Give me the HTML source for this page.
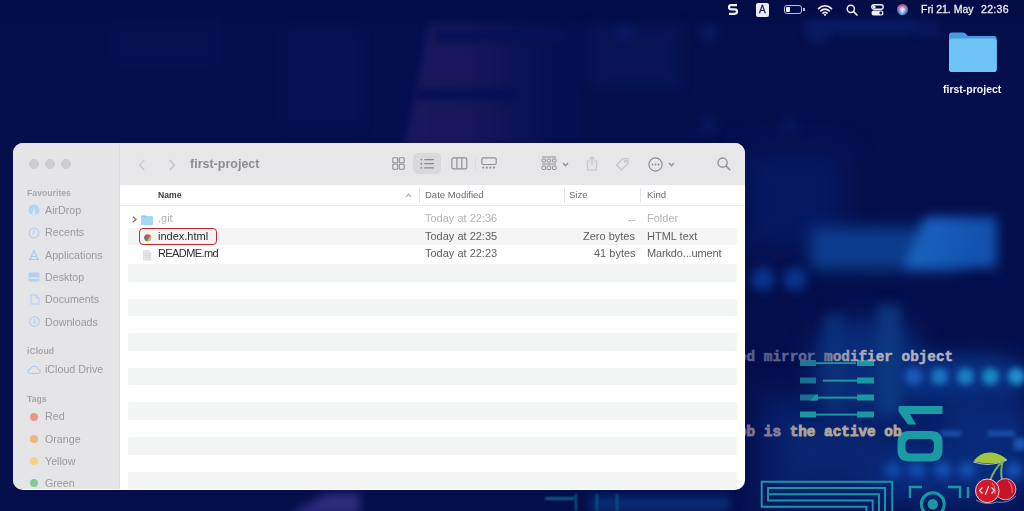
<!DOCTYPE html>
<html><head><meta charset="utf-8">
<style>
*{margin:0;padding:0;box-sizing:border-box}
html,body{width:1024px;height:511px;overflow:hidden}
body{position:relative;background:#040b4c;font-family:"Liberation Sans",sans-serif}
.abs{position:absolute}
svg{position:absolute;overflow:visible}
.t{position:absolute;line-height:1;white-space:nowrap;will-change:transform}
/* window */
#win{position:absolute;left:13px;top:143px;width:732px;height:347px;border-radius:10px;overflow:hidden;background:#fff}
#side{position:absolute;left:0;top:0;width:107px;height:346px;background:#e5e5e8;border-right:1px solid #dcdcdf}
#tb{position:absolute;left:107px;top:0;width:625px;height:42px;background:#e7e7ea}
#hdr{position:absolute;left:107px;top:42px;width:625px;height:21px;background:#fff;border-bottom:1px solid #ebebeb}
.tl{position:absolute;top:16px;width:10px;height:10px;border-radius:50%;background:#cdcdd1}
.sh{font-size:8.7px;font-weight:bold;color:#a8a8ac;left:13.5px}
.si{font-size:10.7px;color:#9a9a9f;left:32.4px}
.dot{position:absolute;left:16.5px;width:8px;height:8px;border-radius:50%}
.hd{font-size:9.5px;color:#6c6c70;top:47px}
.hsep{position:absolute;top:45px;width:1px;height:15px;background:#e4e4e4}
.stripe{position:absolute;left:115px;width:609px;height:17.5px;background:#f3f4f4;border-radius:2px}
.cell{font-size:11px;color:#2b2b2b}
.g{color:#606064}
.lg{color:#b4b4b8}
</style></head><body>

<!-- desktop background texture -->
<div class="abs" style="left:0;top:0;width:1024px;height:511px;background:#040e4c"></div>
<div class="abs" style="left:-20px;top:-10px;width:1064px;height:27px;background:#030c46;filter:blur(3px)"></div>
<!-- top faint shapes -->
<div class="abs" style="left:110px;top:20px;width:110px;height:48px;background:#05104f;filter:blur(6px)"></div>
<div class="abs" style="left:285px;top:30px;width:75px;height:97px;background:#051150;filter:blur(6px)"></div>
<div class="abs" style="filter:blur(3px);left:0;top:0"><div class="abs" style="left:405px;top:24px;width:180px;height:121px;background:linear-gradient(90deg,#1a185c 0,#17175a 35%,#0d1256 62%,#050e50 85%);clip-path:polygon(13% 0,100% 0,100% 100%,0 100%)"></div></div>
<div class="abs" style="left:436px;top:30px;width:130px;height:11px;background:#051058;filter:blur(3px)"></div>
<div class="abs" style="left:416px;top:89px;width:100px;height:11px;background:#051058;filter:blur(3px)"></div>
<div class="abs" style="left:590px;top:25px;width:90px;height:62px;background:#071456;filter:blur(6px)"></div>
<div class="abs" style="left:618px;top:26px;width:14px;height:14px;background:#091a64;filter:blur(4px)"></div>
<div class="abs" style="left:702px;top:26px;width:15px;height:14px;background:#091a64;filter:blur(4px)"></div>
<div class="abs" style="left:700px;top:118px;width:16px;height:16px;background:#07165e;filter:blur(4px)"></div>
<div class="abs" style="left:781px;top:118px;width:16px;height:16px;background:#07165e;filter:blur(4px)"></div>
<div class="abs" style="left:805px;top:20px;width:115px;height:13px;background:#0a1c66;filter:blur(5px)"></div><div class="abs" style="left:808px;top:24px;width:20px;height:18px;background:#0a1a62;filter:blur(4px)"></div><div class="abs" style="left:920px;top:22px;width:20px;height:14px;background:#081660;filter:blur(4px)"></div>
<!-- right lower area glow -->
<div class="abs" style="left:745px;top:150px;width:100px;height:100px;background:#051860;filter:blur(14px)"></div>
<div class="abs" style="left:760px;top:395px;width:264px;height:116px;background:#07206a;filter:blur(14px)"></div>
<div class="abs" style="left:812px;top:318px;width:110px;height:95px;border-radius:40%;background:#0a2c78;filter:blur(12px)"></div>
<div class="abs" style="left:895px;top:355px;width:135px;height:45px;border-radius:40%;background:#0b3384;filter:blur(10px)"></div>
<div class="abs" style="left:860px;top:450px;width:170px;height:40px;border-radius:40%;background:#0a2e80;filter:blur(10px)"></div>
<div class="abs" style="left:950px;top:405px;width:74px;height:60px;background:#0a2a7a;filter:blur(12px)"></div>
<div class="abs" style="left:790px;top:430px;width:90px;height:45px;background:#0a2670;filter:blur(10px)"></div>
<!-- bright band -->
<div class="abs" style="left:810px;top:227px;width:150px;height:43px;background:#0c3d8c;filter:blur(8px)"></div>
<div class="abs" style="filter:blur(6px);left:0;top:0"><div class="abs" style="left:903px;top:217px;width:94px;height:51px;background:linear-gradient(100deg,#1a66c0 0,#1558b4 55%,#124eaa 100%);clip-path:polygon(24% 0,100% 0,100% 100%,0 100%)"></div></div>
<div class="abs" style="left:751px;top:267px;width:24px;height:24px;border-radius:50%;background:#0a3288;filter:blur(5px)"></div>
<div class="abs" style="left:783px;top:267px;width:24px;height:24px;border-radius:50%;background:#0a3288;filter:blur(5px)"></div>
<!-- faint vertical bars -->
<div class="abs" style="left:825px;top:315px;width:18px;height:95px;background:#0b3078;filter:blur(6px)"></div>
<div class="abs" style="left:878px;top:305px;width:22px;height:110px;background:#0c387e;filter:blur(6px)"></div>
<!-- blurred dot rows -->
<div class="abs" style="left:905px;top:368px;width:17px;height:17px;border-radius:50%;background:#1a5cb8;filter:blur(3px)"></div>
<div class="abs" style="left:931px;top:368px;width:17px;height:17px;border-radius:50%;background:#1a74c0;filter:blur(3px)"></div>
<div class="abs" style="left:957px;top:368px;width:17px;height:17px;border-radius:50%;background:#1a80c4;filter:blur(3px)"></div>
<div class="abs" style="left:982px;top:368px;width:17px;height:17px;border-radius:50%;background:#1a88c4;filter:blur(3px)"></div>
<div class="abs" style="left:1008px;top:368px;width:17px;height:17px;border-radius:50%;background:#1e90cc;filter:blur(3px)"></div>
<div class="abs" style="left:885px;top:462px;width:16px;height:16px;border-radius:50%;background:#124aa8;filter:blur(4px)"></div>
<div class="abs" style="left:909px;top:462px;width:16px;height:16px;border-radius:50%;background:#1450b0;filter:blur(4px)"></div>
<div class="abs" style="left:935px;top:462px;width:16px;height:16px;border-radius:50%;background:#1654b4;filter:blur(4px)"></div>
<div class="abs" style="left:959px;top:462px;width:16px;height:16px;border-radius:50%;background:#1654b4;filter:blur(4px)"></div>
<div class="abs" style="left:1006px;top:462px;width:16px;height:16px;border-radius:50%;background:#1654b4;filter:blur(4px)"></div>
<!-- dashes -->
<div class="abs" style="left:941px;top:431px;width:20px;height:5px;background:#1a58b0;filter:blur(2px)"></div>
<div class="abs" style="left:988px;top:431px;width:27px;height:5px;background:#1a58b0;filter:blur(2px)"></div>
<div class="abs" style="left:1014px;top:438px;width:12px;height:12px;background:#1a58b0;filter:blur(2.5px)"></div>
<!-- teal line rows -->
<svg style="left:798px;top:358px;filter:blur(0.7px)" width="80" height="64" viewBox="0 0 80 64" fill="#1a98a0">
  <rect x="2" y="2" width="16" height="6" fill="#1a7898"/><rect x="18" y="4.2" width="40" height="1.8"/><rect x="59" y="2" width="17" height="6"/>
  <rect x="2" y="19.5" width="16" height="6" fill="#1a7090"/><rect x="25" y="21.6" width="34" height="2"/><rect x="59" y="19.5" width="17" height="6"/>
  <rect x="2" y="36.5" width="16" height="6" fill="#1a7090"/><path d="M12 42.5L18 36.5H20V42.5Z"/><rect x="18" y="38.6" width="41" height="2"/><rect x="59" y="36.5" width="17" height="6"/>
  <rect x="2" y="53.5" width="16" height="6"/><rect x="18" y="55.6" width="41" height="2"/><rect x="59" y="53.5" width="17" height="6"/>
</svg>
<!-- 01 rotated -->
<svg style="left:890px;top:400px;filter:blur(0.7px)" width="60" height="70" viewBox="890 400 60 70" fill="#1a9aa2">
  <path d="M898.5 406H942.5V414H910L916 424.5H908L898.5 411.5Z"/>
  <path fill-rule="evenodd" d="M909 431H931Q942.5 431 942.5 442.5V450Q942.5 461.5 931 461.5H909Q897.5 461.5 897.5 450V442.5Q897.5 431 909 431ZM911 439Q905.5 439 905.5 444.5V448Q905.5 453.5 911 453.5H928.5Q934 453.5 934 448V444.5Q934 439 928.5 439Z"/>
</svg>
<!-- nested rectangles (maze) -->
<svg style="left:750px;top:470px;filter:blur(0.6px)" width="160" height="41" viewBox="750 470 160 41" fill="none" stroke="#1a96a6" stroke-width="1.9">
  <path d="M866.4 512V506.7H761.7V481.7H892.2V512"/>
  <path d="M872.7 512V500.5H768V488H885V512"/>
  <path d="M768 494.2H879V512"/>
</svg>
<!-- bracket frame with circle -->
<svg style="left:880px;top:470px;filter:blur(0.6px)" width="100" height="41" viewBox="880 470 100 41" fill="none" stroke="#1a98a2" stroke-width="2.4">
  <path d="M910 498V487H922M948 487H960V498M968 487V498"/>
  <circle cx="932.8" cy="504.2" r="11.5" stroke-width="3"/>
  <circle cx="932.8" cy="504.2" r="5.2" fill="#1a98a2" stroke="none"/>
</svg>
<!-- monospace texts -->
<svg style="left:730px;top:330px" width="240" height="120" viewBox="730 330 240 120">
  <defs>
    <linearGradient id="g1" gradientUnits="userSpaceOnUse" x1="745" y1="0" x2="950" y2="0">
      <stop offset="0" stop-color="#56608e"/><stop offset="0.35" stop-color="#5e6690"/><stop offset="0.48" stop-color="#9a98b0"/><stop offset="0.6" stop-color="#b2adbc"/><stop offset="1" stop-color="#b6b2be"/>
    </linearGradient>
    <linearGradient id="g2" gradientUnits="userSpaceOnUse" x1="745" y1="0" x2="900" y2="0">
      <stop offset="0" stop-color="#706e98"/><stop offset="0.25" stop-color="#8e82a0"/><stop offset="0.35" stop-color="#b0a49c"/><stop offset="1" stop-color="#b4a898"/>
    </linearGradient>
  </defs>
  <text x="738" y="361" font-family="Liberation Mono" font-weight="bold" font-size="14.35" fill="url(#g1)" stroke="url(#g1)" stroke-width="0.5">ed mirror modifier object</text>
  <text x="738" y="436" font-family="Liberation Mono" font-weight="bold" font-size="14.35" fill="url(#g2)" stroke="url(#g2)" stroke-width="0.9">ob is the active ob</text>
</svg>
<!-- bottom strip shapes -->
<div class="abs" style="filter:blur(4px);left:0;top:0"><div class="abs" style="left:288px;top:493px;width:72px;height:22px;background:#2c2a7c;clip-path:polygon(55% 0,100% 0,100% 100%,0 100%)"></div></div>
<div class="abs" style="left:590px;top:496px;width:140px;height:16px;background:#082a72;filter:blur(4px)"></div>
<div class="abs" style="left:545px;top:497px;width:30px;height:3px;background:#0f5a88;filter:blur(1px)"></div>
<div class="abs" style="left:575px;top:494px;width:2px;height:17px;background:#0f5a88;filter:blur(1px)"></div>
<div class="abs" style="left:596px;top:494px;width:2px;height:17px;background:#0f5a88;filter:blur(1px)"></div>
<div class="abs" style="left:616px;top:494px;width:2px;height:17px;background:#0f5a88;filter:blur(1px)"></div>
<!-- cherry logo -->
<svg style="left:960px;top:440px" width="64" height="71" viewBox="960 440 64 71">
  <path d="M973.5 461.5Q980 451.5 992 452.5Q1000 453.5 1007 459.5Q996 466 973.5 461.5Z" fill="#a2c640"/>
  <path d="M973.5 462Q990 467.5 1007 460" fill="none" stroke="#bcd4ee" stroke-width="1.1" opacity=".85"/>
  <path d="M1003 461Q994 469 989.5 482M1003 461Q1000 470 1002 480" fill="none" stroke="#7eae5c" stroke-width="2"/>
  <circle cx="1005.3" cy="489.2" r="10.6" fill="#c41628" stroke="#e6c0d0" stroke-width="0.9"/>
  <path d="M1008 481Q1013 485 1012 493" fill="none" stroke="#f07888" stroke-width="1.1" opacity=".8"/>
  <circle cx="987.3" cy="490.8" r="11.8" fill="#d01a2a" stroke="#f0cfd8" stroke-width="1"/>
  <path d="M992 483Q996 487 995 494" fill="none" stroke="#f07888" stroke-width="1.1" opacity=".8"/>
  <path d="M982.5 487.5L979.5 490.5L982.5 493.5M985.3 494.8L988.7 486.3M991.5 487.5L994.5 490.5L991.5 493.5" fill="none" stroke="#fde6ea" stroke-width="1.2"/>
  <path d="M976 500Q986 506 997 502Q1008 504 1016 496" fill="none" stroke="#9ab4e0" stroke-width="1" opacity=".7"/>
</svg>
<!-- menubar -->
<svg style="left:727px;top:3px" width="12" height="14" viewBox="0 0 12 14"><path d="M10 2.2H4.2Q2 2.2 2 4.3Q2 6.3 4.2 6.3H7.8Q10 6.3 10 8.6Q10 10.8 7.8 10.8H2" fill="none" stroke="#eef0f8" stroke-width="2.2"/></svg>
<div class="abs" style="left:756px;top:3px;width:13px;height:14px;background:#e9ebf5;border-radius:2px"></div>
<div class="t" style="left:758.5px;top:5px;font-size:10px;color:#1a1f50;-webkit-text-stroke:0.3px #1a1f50">A</div>
<div class="abs" style="left:784px;top:5px;width:18px;height:9px;border:1px solid #b9bedc;border-radius:3px"></div>
<div class="abs" style="left:786px;top:7px;width:4px;height:5px;background:#eef0f8;border-radius:1px"></div>
<div class="abs" style="left:803px;top:8px;width:1.5px;height:3px;background:#b9bedc"></div>
<svg style="left:817px;top:4px" width="16" height="12" viewBox="0 0 16 12"><path d="M1.5 4.6A9 9 0 0 1 14.5 4.6M3.8 6.9A5.8 5.8 0 0 1 12.2 6.9M6 9.1A2.7 2.7 0 0 1 10 9.1" fill="none" stroke="#eef0f8" stroke-width="1.6" stroke-linecap="round"/><circle cx="8" cy="10.8" r="1.1" fill="#eef0f8"/></svg>
<svg style="left:846px;top:4px" width="12" height="12" viewBox="0 0 12 12"><circle cx="4.8" cy="4.8" r="3.6" fill="none" stroke="#eef0f8" stroke-width="1.5"/><path d="M7.6 7.6L11 11" stroke="#eef0f8" stroke-width="1.7" stroke-linecap="round"/></svg>
<svg style="left:871px;top:4px" width="13" height="12" viewBox="0 0 13 12"><rect x="0.8" y="0.8" width="11.4" height="4.4" rx="2.2" fill="none" stroke="#eef0f8" stroke-width="1.4"/><circle cx="3.2" cy="3" r="1.4" fill="#eef0f8"/><rect x="0.5" y="6.5" width="12" height="5" rx="2.5" fill="#eef0f8"/><circle cx="9.8" cy="9" r="1.4" fill="#0b1250"/></svg>
<div class="abs" style="left:897px;top:4px;width:11px;height:11px;border-radius:50%;background:radial-gradient(circle at 50% 52%,#f8f8ff 0,rgba(230,230,255,.8) 20%,rgba(255,255,255,0) 55%),conic-gradient(from 300deg,#c058a8 0,#b05aa8 90deg,#4a8a9a 140deg,#7a5ab0 200deg,#50c0e8 250deg,#4a70c8 300deg,#c058a8 360deg);filter:blur(0.5px)"></div>
<div class="t" style="left:921px;top:3.9px;font-size:10.5px;color:#e9ebf5;-webkit-text-stroke:0.3px #e9ebf5">Fri 21. May</div>
<div class="t" style="left:981.3px;top:3.9px;font-size:10.5px;color:#e9ebf5;-webkit-text-stroke:0.3px #e9ebf5;letter-spacing:0.3px">22:36</div>

<!-- desktop folder -->
<svg style="left:947px;top:32px" width="52" height="41" viewBox="0 0 52 41">
  <path d="M2 3.5Q2 0.6 4.8 0.6H15.5Q17.5 0.6 19 2L21 4H47Q49.7 4 49.7 6.8V12H2Z" fill="#4a9cdc"/>
  <rect x="2" y="6.5" width="47.7" height="33.5" rx="3" fill="#68bdf3"/>
  <rect x="2" y="7" width="47.7" height="33" rx="3" fill="#6ec3f7"/>
</svg>
<div class="t" style="left:943px;top:84.1px;font-size:10.5px;font-weight:bold;color:#f4f5fa">first-project</div>

<!-- finder window -->
<div id="win">
  <div id="side">
    <div class="tl" style="left:16px;top:16px"></div>
    <div class="tl" style="left:32px;top:16px"></div>
    <div class="tl" style="left:48px;top:16px"></div>
    <div class="t sh" style="top:45.9px">Favourites</div>
    <!-- airdrop icon -->
    <svg style="left:15px;top:61px" width="12" height="12" viewBox="0 0 12 12"><circle cx="6" cy="6" r="5.5" fill="#b7d3f3"/><path d="M6 4L3.8 11.5H8.2Z" fill="#d9e8f8"/></svg>
    <div class="t si" style="top:62px">AirDrop</div>
    <svg style="left:15px;top:84px" width="12" height="12" viewBox="0 0 12 12"><circle cx="6" cy="6" r="4.8" fill="none" stroke="#b4cff0" stroke-width="1.1"/><path d="M6 3V6L4.2 7.5" fill="none" stroke="#b4cff0" stroke-width="1"/></svg>
    <div class="t si" style="top:84.3px">Recents</div>
    <svg style="left:15px;top:106px" width="12" height="12" viewBox="0 0 12 12"><path d="M2 10.5L6 1.5L10 10.5M3.5 7.5H8.5M1 10.5H11" fill="none" stroke="#a9c8ef" stroke-width="1.2"/></svg>
    <div class="t si" style="top:106.6px">Applications</div>
    <svg style="left:15px;top:129px" width="12" height="11" viewBox="0 0 12 11"><rect x="0.5" y="0.5" width="11" height="9" rx="1" fill="#b4d0f0"/><rect x="1.5" y="5.3" width="9" height="1.5" fill="#e3e3e7"/></svg>
    <div class="t si" style="top:128.9px">Desktop</div>
    <svg style="left:16.5px;top:151px" width="10" height="11" viewBox="0 0 10 11"><path d="M1 1H6L9 4V10H1Z" fill="none" stroke="#b4d0f0" stroke-width="1.1"/><path d="M6 1V4H9" fill="none" stroke="#b4d0f0" stroke-width="1"/></svg>
    <div class="t si" style="top:151.2px">Documents</div>
    <svg style="left:15.5px;top:172.5px" width="11" height="11" viewBox="0 0 11 11"><circle cx="5.5" cy="5.5" r="4.8" fill="none" stroke="#b4cff0" stroke-width="1.1"/><path d="M5.5 3V7.5M3.7 5.8L5.5 7.6L7.3 5.8" fill="none" stroke="#b4cff0" stroke-width="1"/></svg>
    <div class="t si" style="top:173.5px">Downloads</div>
    <div class="t sh" style="top:204px">iCloud</div>
    <svg style="left:14px;top:222px" width="14" height="9" viewBox="0 0 14 9"><path d="M3.5 8.5H11Q13.3 8.5 13.3 6.3Q13.3 4.2 11 4.2Q10.3 1 7.2 1Q4.5 1 3.9 3.6Q1 3.8 1 6.2Q1 8.5 3.5 8.5Z" fill="none" stroke="#a9c8ec" stroke-width="1"/></svg>
    <div class="t si" style="top:220.8px">iCloud Drive</div>
    <div class="t sh" style="top:251.9px">Tags</div>
    <div class="dot" style="top:270.1px;background:#ee9393"></div><div class="t si" style="top:268.4px">Red</div>
    <div class="dot" style="top:292.4px;background:#f0b57c"></div><div class="t si" style="top:290.5px">Orange</div>
    <div class="dot" style="top:314.3px;background:#efd67f"></div><div class="t si" style="top:312.6px">Yellow</div>
    <div class="dot" style="top:336.3px;background:#7fcb96"></div><div class="t si" style="top:334.7px">Green</div>
  </div>
  <div id="tb"></div>
  <!-- toolbar (coords relative to window) -->
  <svg style="left:124.5px;top:15.5px" width="8" height="12" viewBox="0 0 8 13"><path d="M6.5 1L1.5 6.5L6.5 12" fill="none" stroke="#c9c9cd" stroke-width="1.5"/></svg>
  <svg style="left:154.5px;top:15.5px" width="8" height="12" viewBox="0 0 8 13"><path d="M1.5 1L6.5 6.5L1.5 12" fill="none" stroke="#c3c3c7" stroke-width="1.5"/></svg>
  <div class="t" style="left:177px;top:14.6px;font-size:12.5px;font-weight:bold;color:#8d8d92">first-project</div>

  <!-- view icons -->
  <svg style="left:378.5px;top:14px" width="13" height="13" viewBox="0 0 13 13" fill="none" stroke="#8e8e93" stroke-width="1.1"><rect x="0.8" y="0.8" width="4.9" height="4.9" rx="0.8"/><rect x="7.3" y="0.8" width="4.9" height="4.9" rx="0.8"/><rect x="0.8" y="7.3" width="4.9" height="4.9" rx="0.8"/><rect x="7.3" y="7.3" width="4.9" height="4.9" rx="0.8"/></svg>
  <div class="abs" style="left:399.5px;top:10px;width:28px;height:21px;border-radius:5px;background:#d9d9dc"></div>
  <svg style="left:406px;top:14.5px" width="16" height="12" viewBox="0 0 16 12"><g fill="#88888d"><circle cx="2.3" cy="1.6" r="0.85"/><circle cx="2.3" cy="5.7" r="0.85"/><circle cx="2.3" cy="9.8" r="0.85"/></g><path d="M5.3 1.6H14.8M5.3 5.7H14.8M5.3 9.8H14.8" stroke="#88888d" stroke-width="1.2"/></svg>
  <svg style="left:438px;top:14px" width="16.5" height="12.5" viewBox="0 0 16.5 12.5" fill="none" stroke="#8e8e93" stroke-width="1.15"><rect x="0.9" y="0.9" width="14.9" height="10.9" rx="1.6"/><path d="M5.9 1V11.8M10.8 1V11.8"/></svg>
  <div class="abs" style="left:462px;top:13px;width:1px;height:16px;background:#dcdcdf"></div>
  <svg style="left:467.5px;top:14px" width="16" height="13" viewBox="0 0 16 13"><rect x="0.8" y="0.9" width="14.4" height="6.6" rx="1.5" fill="none" stroke="#8e8e93" stroke-width="1.15"/><g fill="#8e8e93"><rect x="1.2" y="9.6" width="1.9" height="1.9"/><rect x="4.8" y="9.6" width="1.9" height="1.9"/><rect x="8.4" y="9.6" width="1.9" height="1.9"/><rect x="12" y="9.6" width="1.9" height="1.9"/></g></svg>

  <svg style="left:528px;top:13px" width="16" height="15" viewBox="0 0 16 15" fill="none" stroke="#8e8e93" stroke-width="1"><path d="M1 1H15M1 8H15" stroke-width="1.2"/><rect x="1" y="3" width="3.5" height="3" rx="0.6"/><rect x="6.2" y="3" width="3.5" height="3" rx="0.6"/><rect x="11.5" y="3" width="3.5" height="3" rx="0.6"/><rect x="1" y="10" width="3.5" height="3.5" rx="0.6"/><rect x="6.2" y="10" width="3.5" height="3.5" rx="0.6"/><rect x="11.5" y="10" width="3.5" height="3.5" rx="0.6"/></svg>
  <svg style="left:549px;top:18.5px" width="7" height="5" viewBox="0 0 7 5"><path d="M1 1L3.5 3.8L6 1" fill="none" stroke="#8e8e93" stroke-width="1.3"/></svg>
  <svg style="left:573px;top:13px" width="12" height="15" viewBox="0 0 12 15" fill="none" stroke="#c6c6ca" stroke-width="1.2"><path d="M4 5H1.5V14H10.5V5H8"/><path d="M6 9.5V1M3.5 3.3L6 0.8L8.5 3.3"/></svg>
  <svg style="left:602px;top:14px" width="15" height="14" viewBox="0 0 15 14" fill="none" stroke="#c6c6ca" stroke-width="1.2"><path d="M8 1.5H13V6.5L6.5 13L1.5 8Z" stroke-linejoin="round"/><circle cx="10.5" cy="4" r="0.9"/></svg>
  <svg style="left:635px;top:13.5px" width="15" height="15" viewBox="0 0 15 15"><circle cx="7.5" cy="7.5" r="6.6" fill="none" stroke="#8e8e93" stroke-width="1.2"/><g fill="#8e8e93"><circle cx="4.5" cy="7.5" r="0.9"/><circle cx="7.5" cy="7.5" r="0.9"/><circle cx="10.5" cy="7.5" r="0.9"/></g></svg>
  <svg style="left:655px;top:18.5px" width="7" height="5" viewBox="0 0 7 5"><path d="M1 1L3.5 3.8L6 1" fill="none" stroke="#8e8e93" stroke-width="1.3"/></svg>
  <svg style="left:704px;top:14px" width="14" height="14" viewBox="0 0 14 14"><circle cx="5.6" cy="5.6" r="4.6" fill="none" stroke="#8e8e93" stroke-width="1.3"/><path d="M9 9L12.8 12.8" stroke="#8e8e93" stroke-width="1.5" stroke-linecap="round"/></svg>

  <div id="hdr"></div>
  <div class="t" style="left:144.5px;top:47.7px;font-size:8.6px;font-weight:bold;color:#3c3c40">Name</div>
  <svg style="left:392px;top:50px" width="7" height="5" viewBox="0 0 7 5"><path d="M1 4L3.5 1.2L6 4" fill="none" stroke="#a0a0a4" stroke-width="1.1"/></svg>
  <div class="hsep" style="left:406px"></div>
  <div class="t hd" style="left:412.3px">Date Modified</div>
  <div class="hsep" style="left:550.5px"></div>
  <div class="t hd" style="left:556.4px">Size</div>
  <div class="hsep" style="left:627px"></div>
  <div class="t hd" style="left:633.5px">Kind</div>

  <div class="stripe" style="top:85px;height:16.8px;background:#f5f5f5"></div>
  <div class="stripe" style="top:121.0px"></div>
  <div class="stripe" style="top:155.6px"></div>
  <div class="stripe" style="top:190.2px"></div>
  <div class="stripe" style="top:224.8px"></div>
  <div class="stripe" style="top:259.4px"></div>
  <div class="stripe" style="top:294.0px"></div>
  <div class="stripe" style="top:328.6px"></div>

  <!-- row 1 .git -->
  <svg style="left:119px;top:73px" width="5" height="7" viewBox="0 0 5 7"><path d="M0.8 0.8L4 3.5L0.8 6.2" fill="none" stroke="#77777b" stroke-width="1.2"/></svg>
  <svg style="left:128px;top:72px" width="12" height="10" viewBox="0 0 12 10"><path d="M0.3 1.2Q0.3 0.3 1.2 0.3H4.2L5.2 1.3H11.7V9.7H0.3Z" fill="#8fcaf0"/><rect x="0.3" y="2.2" width="11.4" height="7.5" rx="0.6" fill="#a5d7f6"/></svg>
  <div class="t cell lg" style="left:144.5px;top:69.8px">.git</div>
  <div class="t cell lg" style="left:412.3px;top:69.8px">Today at 22:36</div>
  <div class="t cell lg" style="left:614.5px;top:70.8px">--</div>
  <div class="t cell lg" style="left:633.5px;top:69.8px">Folder</div>

  <!-- row 2 index.html -->
  <svg style="left:130.5px;top:90.5px" width="7.5" height="7.5" viewBox="0 0 8 8"><circle cx="4" cy="4" r="3.7" fill="#e05040"/><path d="M4 4L0.8 5.85A3.7 3.7 0 0 0 4 7.7Z" fill="#3a9a55"/><path d="M4 4L4 7.7A3.7 3.7 0 0 0 7.2 2.15Z" fill="#f2c030"/><path d="M0.8 2.15A3.7 3.7 0 0 0 0.8 5.85L4 4Z" fill="#3a9a55"/><circle cx="4" cy="4" r="1.6" fill="#5080e0"/></svg>
  <div class="t cell" style="left:144.5px;top:87.5px">index.html</div>
  <div class="t cell g" style="left:412.3px;top:87.5px">Today at 22:35</div>
  <div class="t cell g" style="left:570.2px;top:87.5px">Zero bytes</div>
  <div class="t cell g" style="left:633.5px;top:87.5px">HTML text</div>

  <!-- row 3 README.md -->
  <svg style="left:130px;top:106.5px" width="8.5" height="10.5" viewBox="0 0 9 11"><path d="M0.5 0.5H6L8.5 3V10.5H0.5Z" fill="#e6e6e8" stroke="#d2d2d5" stroke-width="0.6"/><path d="M2 4H7M2 6H7M2 8H7" stroke="#c9c9cc" stroke-width="0.6"/></svg>
  <div class="t cell" style="left:144.5px;top:105px;letter-spacing:-0.6px">README.md</div>
  <div class="t cell g" style="left:412.3px;top:105px">Today at 22:23</div>
  <div class="t cell g" style="left:581.2px;top:105px">41 bytes</div>
  <div class="t cell g" style="left:633.5px;top:105px;letter-spacing:-0.15px">Markdo...ument</div>

  <div class="abs" style="left:125.5px;top:85px;width:78.5px;height:17px;border:1.6px solid #c32a33;border-radius:4px"></div>
</div>

</body></html>
